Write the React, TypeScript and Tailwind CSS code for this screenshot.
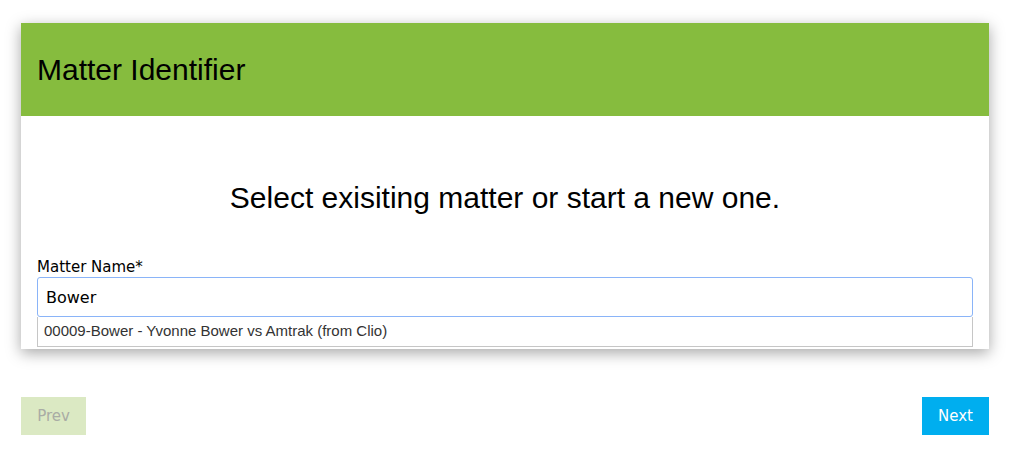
import React from "react";

export default function App() {
  return (
    <div className="w-[1025px] h-[465px] bg-white pt-[23px] pl-[21px]" style={{ fontFamily: '"Liberation Sans", Arial, sans-serif' }}>
      <div className="w-[968px] bg-white shadow-[0_4px_14px_rgba(0,0,0,0.35)]">
        <div className="h-[93px] bg-[#86bc3e] flex items-center pl-[16px]">
          <h1 className="text-[30px] text-black leading-none">Matter Identifier</h1>
        </div>
        <div className="px-[16px] pt-[67px] pb-[2px]">
          <h2 className="text-[30px] text-black text-center leading-none">Select exisiting matter or start a new one.</h2>
          <div className="mt-[47px] text-[15px] text-black leading-none" style={{ fontFamily: '"DejaVu Sans", sans-serif' }}>Matter Name*</div>
          <input
            readOnly
            value="Bower"
            className="mt-[2px] block w-full h-[40px] border border-[#8ab4f8] rounded-[3px] px-[8px] text-[16px] text-black outline-none"
            style={{ fontFamily: '"DejaVu Sans", sans-serif' }}
          />
          <div className="h-[30px] border border-[#c6c6c6] border-t-0 flex items-center px-[6px] text-[15px] text-[#333]">
            00009-Bower - Yvonne Bower vs Amtrak (from Clio)
          </div>
        </div>
      </div>
      <div className="w-[968px] flex justify-between mt-[48px]" style={{ fontFamily: '"DejaVu Sans", sans-serif' }}>
        <button className="w-[65px] h-[38px] bg-[#dbe9c3] text-[#a9aca5] text-[15px]">Prev</button>
        <button className="w-[67px] h-[38px] bg-[#00aeef] text-white text-[15px]">Next</button>
      </div>
    </div>
  );
}
